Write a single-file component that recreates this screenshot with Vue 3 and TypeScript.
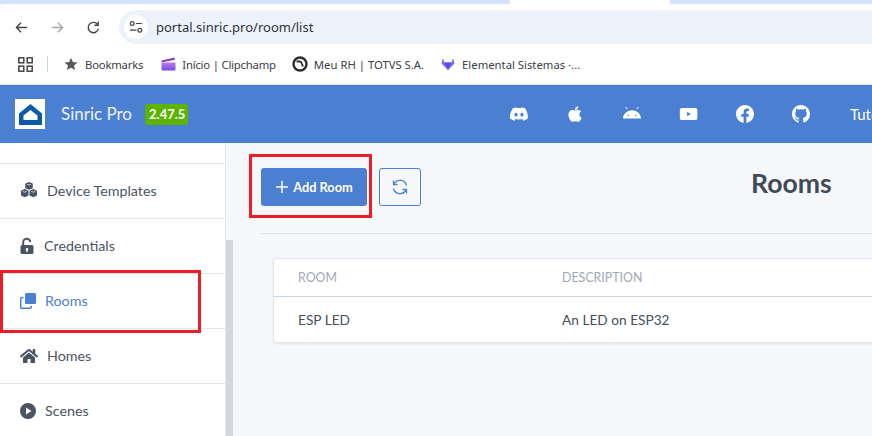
<script setup lang="ts">
interface NavItem { label: string; icon: string; active?: boolean }
const nav: NavItem[] = [
  { label: 'Device Templates', icon: 'cubes' },
  { label: 'Credentials', icon: 'lock' },
  { label: 'Rooms', icon: 'rooms', active: true },
  { label: 'Homes', icon: 'home' },
  { label: 'Scenes', icon: 'play' },
]
</script>

<template>
  <div class="screen">
    <div class="tabstrip"><div class="tab"></div></div>

    <div class="chrome">
      <div class="toolbar">
        <svg class="tb-icon" viewBox="0 0 16 16"><path d="M14 8H3M7.500 3 2.600 8l4.900 5" fill="none" stroke="#444" stroke-width="1.500"/></svg>
        <svg class="tb-icon" viewBox="0 0 16 16"><path d="M2 8h11M8.500 3l4.900 5-4.900 5" fill="none" stroke="#a8a8a8" stroke-width="1.500"/></svg>
        <svg class="tb-icon" viewBox="0 0 16 16"><path d="M13.200 9.500A5.500 5.500 0 1 1 12 4.400M13 1.500V5.600H8.900" fill="none" stroke="#444" stroke-width="1.500"/></svg>
        <div class="omnibox">
          <span class="site-chip">
            <svg width="14" height="14" viewBox="0 0 14 14" fill="none" stroke="#444" stroke-width="1.200"><circle cx="3.200" cy="3.500" r="1.900"/><path d="M7 3.500h6M1 10.200h6.500"/><circle cx="10.800" cy="10.200" r="1.900"/></svg>
          </span>
          <span class="url">portal.sinric.pro/room/list</span>
        </div>
      </div>
      <div class="bookmarks">
        <svg class="apps" viewBox="0 0 15 15" fill="none" stroke="#444" stroke-width="1.500"><rect x=".8" y=".8" width="5" height="5"/><rect x="9.200" y=".8" width="5" height="5"/><rect x=".8" y="9.200" width="5" height="5"/><rect x="9.200" y="9.200" width="5" height="5"/></svg>
        <span class="sep"></span>
        <span class="bm bm-star">
          <svg width="14" height="14" viewBox="0 0 14 14"><path d="M7 .8l1.900 4.300 4.600.4-3.500 3 1.100 4.600L7 10.700l-4.100 2.400L4 8.500.5 5.500l4.600-.4z" fill="#5a5a5a"/></svg>
          Bookmarks
        </span>
        <span class="bm bm-clip">
          <svg width="15" height="14" viewBox="0 0 15 14"><defs><linearGradient id="clip" x1="0" x2="0" y1="0" y2="1"><stop offset="0" stop-color="#c678e8"/><stop offset="1" stop-color="#6a4fe8"/></linearGradient></defs><path d="M.5 3.500 13.500.6l.5 2.200L.5 5.500z" fill="#7b45c8"/><rect x=".5" y="5.500" width="14" height="8" rx="1" fill="url(#clip)"/></svg>
          Início | Clipchamp
        </span>
        <span class="bm bm-rh">
          <svg width="16" height="16" viewBox="0 0 16 16"><circle cx="8" cy="8" r="6.500" fill="#fff" stroke="#2d2d2d" stroke-width="2.400"/><path d="M4.500 5.500H8c1 0 1.500 1 2 2.500l1 2.500" fill="none" stroke="#2d2d2d" stroke-width="1.800"/></svg>
          Meu RH | TOTVS S.A.
        </span>
        <span class="bm">
          <svg width="14" height="14" viewBox="0 0 14 14"><path d="M2 1 .5 6.500 7 13l6.500-6.500L12 1l-1.500 4.500h-7z" fill="#7a6cf0"/><path d="M3.500 5.500h7L7 13z" fill="#5a4be0"/></svg>
          Elemental Sistemas ·...
        </span>
      </div>
    </div>

    <header class="topbar">
      <div class="logo">
        <svg width="23" height="21" viewBox="0 0 23 21"><path d="M11.500 0 23 9.500V21H0V9.500z" fill="#0b5ba8"/><path d="M11.500 6 18.500 11.500V16h-14v-4.500z" fill="#fff"/></svg>
      </div>
      <span class="brand">Sinric Pro</span>
      <span class="version">2.47.5</span>
      <nav class="social">
        <svg class="s-icon" viewBox="0 0 24 24"><path d="M20.317 4.370a19.790 19.790 0 0 0-4.885-1.515c-.210.375-.445.865-.608 1.250a18.300 18.300 0 0 0-5.487 0c-.164-.393-.406-.874-.618-1.250A19.740 19.740 0 0 0 3.834 4.370C.534 9.046-.320 13.580.099 18.058a19.900 19.900 0 0 0 6.024 3.085c.462-.630.873-1.295 1.226-1.994-.653-.248-1.274-.550-1.872-.892l.364-.302c3.928 1.793 8.180 1.793 12.061 0l.373.302c-.598.342-1.220.644-1.873.891.360.698.772 1.363 1.225 1.994a19.800 19.800 0 0 0 6.033-3.084c.500-5.177-.838-9.674-3.548-13.660zM8.020 15.331c-1.183 0-2.157-1.086-2.157-2.419s.955-2.419 2.157-2.419c1.210 0 2.175 1.095 2.157 2.419 0 1.333-.956 2.419-2.157 2.419zm7.975 0c-1.183 0-2.157-1.086-2.157-2.419s.955-2.419 2.157-2.419c1.210 0 2.175 1.095 2.157 2.419 0 1.333-.946 2.419-2.157 2.419z"/></svg>
        <svg class="s-icon" viewBox="0 0 384 512"><path d="M318.700 268.700c-.2-36.700 16.400-64.400 50-84.800-18.800-26.900-47.200-41.700-84.700-44.600-35.500-2.800-74.300 20.700-88.500 20.700-15 0-49.400-19.700-76.400-19.700C63.300 141.200 4 184.800 4 273.500q0 39.300 14.400 81.200c12.800 36.700 59 126.700 107.200 125.200 25.200-.6 43-17.900 75.800-17.900 31.800 0 48.300 17.900 76.400 17.900 48.600-.7 90.400-82.500 102.600-119.300-65.200-30.700-61.700-90-61.700-91.900zm-56.600-164.200c27.300-32.400 24.800-61.900 24-72.500-24.100 1.400-52 16.400-67.900 34.900-17.500 19.800-27.800 44.300-25.600 71.900 26.100 2 49.900-11.400 69.500-34.300z"/></svg>
        <svg class="s-icon" viewBox="0 0 24 24"><path d="M5.500 5.500 3.500 2.500M18.500 5.500l2-3" stroke="#fff" stroke-width="1.300"/><path fill-rule="evenodd" d="M0 18C.3 12 5 7 12 7S23.700 12 24 18zM7 13a1 1 0 1 0 0 2 1 1 0 0 0 0-2zm10 0a1 1 0 1 0 0 2 1 1 0 0 0 0-2z"/></svg>
        <svg class="s-icon yt" viewBox="0 0 24 24"><path fill-rule="evenodd" d="M3.500 4h17A3.500 3.500 0 0 1 24 7.500v9a3.500 3.500 0 0 1-3.500 3.500h-17A3.500 3.500 0 0 1 0 16.500v-9A3.500 3.500 0 0 1 3.500 4zM10 9v6l5-3z"/></svg>
        <svg class="s-icon" viewBox="0 0 24 24"><path d="M24 12.073c0-6.627-5.373-12-12-12s-12 5.373-12 12c0 5.990 4.388 10.954 10.125 11.854v-8.385H7.078v-3.470h3.047V9.430c0-3.007 1.792-4.669 4.533-4.669 1.312 0 2.686.235 2.686.235v2.953H15.830c-1.491 0-1.956.925-1.956 1.874v2.250h3.328l-.532 3.470h-2.796v8.385C19.612 23.027 24 18.062 24 12.073z"/></svg>
        <svg class="s-icon" viewBox="0 0 16 16"><path d="M8 0C3.580 0 0 3.580 0 8c0 3.540 2.290 6.530 5.470 7.590.4.070.55-.17.55-.38 0-.19-.01-.82-.01-1.490-2.010.37-2.530-.49-2.690-.94-.09-.23-.48-.94-.82-1.130-.28-.15-.68-.52-.01-.53.63-.01 1.080.58 1.230.82.72 1.210 1.870.87 2.330.66.070-.52.28-.87.51-1.070-1.780-.2-3.640-.89-3.640-3.950 0-.87.31-1.590.82-2.150-.08-.2-.36-1.020.08-2.120 0 0 .67-.21 2.200.82.64-.18 1.320-.27 2-.27.68 0 1.360.09 2 .27 1.530-1.040 2.200-.82 2.200-.82.44 1.100.16 1.920.08 2.120.51.56.82 1.270.82 2.150 0 3.070-1.870 3.750-3.650 3.950.29.25.54.73.54 1.480 0 1.070-.01 1.930-.01 2.200 0 .21.15.46.55.38A8.013 8.013 0 0 0 16 8c0-4.420-3.580-8-8-8z"/></svg>
        <span class="nav-text">Tutorials</span>
      </nav>
    </header>

    <div class="body">
      <aside class="sidebar">
        <div class="nav-spacer"></div>
        <div v-for="item in nav" :key="item.label" class="nav-row" :class="{ active: item.active }">
          <svg v-if="item.icon === 'cubes'" class="n-icon cubes" viewBox="0 0 18 18" fill="currentColor"><path d="M9 0 13 1.700V6.500L9 8.200 5 6.500V1.700zM4.500 7.500l4 1.700v5L4.500 16.200l-4-2V9.200zM13.500 7.500l4 1.700v5l-4 2-4-2V9.200z"/><path d="M7 2.400 9 3.200l2-.8M2.500 10l2 .8 2-.8M11.500 10l2 .8 2-.8" fill="none" stroke="#fff" stroke-width=".8"/></svg>
          <svg v-else-if="item.icon === 'lock'" class="n-icon lock" viewBox="0 0 15 16" fill="currentColor"><path fill-rule="evenodd" d="M2 7h10a1.500 1.500 0 0 1 1.500 1.500v6A1.500 1.500 0 0 1 12 16H2a1.500 1.500 0 0 1-1.500-1.500v-6A1.500 1.500 0 0 1 2 7zm5 3a1.300 1.300 0 0 0-.7 2.400V14h1.400v-1.600A1.300 1.300 0 0 0 7 10z"/><path d="M3.200 7V4.500a3.500 3.500 0 0 1 7-.5" fill="none" stroke="currentColor" stroke-width="2"/></svg>
          <svg v-else-if="item.icon === 'rooms'" class="n-icon rooms" viewBox="0 0 16 16"><rect x="5" y="0" width="11" height="11" rx="1.500" fill="currentColor"/><path d="M3.500 4.500H2A1.500 1.500 0 0 0 .7 6v8.500A1.200 1.200 0 0 0 2 15.300h8A1.300 1.300 0 0 0 11.300 14v-1" fill="none" stroke="currentColor" stroke-width="1.500"/></svg>
          <svg v-else-if="item.icon === 'home'" class="n-icon" viewBox="0 0 576 512" fill="currentColor"><path d="M280.370 148.260L96 300.110V464a16 16 0 0 0 16 16l112.060-.29a16 16 0 0 0 15.920-16V368a16 16 0 0 1 16-16h64a16 16 0 0 1 16 16v95.640a16 16 0 0 0 16 16.050L464 480a16 16 0 0 0 16-16V300L295.670 148.260a12.190 12.190 0 0 0-15.300 0zM571.600 251.470L488 182.560V44.050a12 12 0 0 0-12-12h-56a12 12 0 0 0-12 12v72.610L318.470 43a48 48 0 0 0-61 0L4.340 251.470a12 12 0 0 0-1.600 16.900l25.500 31A12 12 0 0 0 45.150 301l235.220-193.740a12.190 12.190 0 0 1 15.300 0L530.900 301a12 12 0 0 0 16.900-1.600l25.500-31a12 12 0 0 0-1.700-16.930z"/></svg>
          <svg v-else class="n-icon play" viewBox="0 0 16 16" fill="currentColor"><path fill-rule="evenodd" d="M8 0a8 8 0 1 1 0 16A8 8 0 0 1 8 0zM6 4.500v7l5.500-3.500z"/></svg>
          <span>{{ item.label }}</span>
        </div>
      </aside>
      <div class="scrolltrack"><div class="scrollthumb"></div></div>

      <main class="content">
        <div class="actions">
          <button class="btn-add">
            <svg width="12" height="12" viewBox="0 0 12 12"><path d="M6 0v12M0 6h12" stroke="#fff" stroke-width="1.500"/></svg>
            Add Room
          </button>
          <button class="btn-refresh">
            <svg width="18" height="18" viewBox="0 0 18 18" fill="none" stroke="#4a7fd1" stroke-width="1.300"><g transform="matrix(-1 0 0 1 18 0)"><path d="M2.500 7.500A6.800 6.800 0 0 1 14.500 5l1 1.500"/><path d="M15.500 2.500v4h-4"/><path d="M15.500 10.500A6.800 6.800 0 0 1 3.500 13l-1-1.500"/><path d="M2.500 15.500v-4h4"/></g></svg>
          </button>
          <h1>Rooms</h1>
        </div>
        <div class="divider"></div>
        <section class="card">
          <div class="row head">
            <span class="col1">ROOM</span>
            <span>DESCRIPTION</span>
          </div>
          <div class="row">
            <span class="col1">ESP LED</span>
            <span>An LED on ESP32</span>
          </div>
        </section>
      </main>
    </div>

    <div class="mark mark-rooms"></div>
    <div class="mark mark-add"></div>
  </div>
</template>

<style>
html, body { margin: 0; padding: 0; overflow: hidden; background: #fff; }
</style>

<style scoped>
.screen {
  position: relative;
  width: 872px;
  height: 436px;
  overflow: hidden;
  display: flex;
  flex-direction: column;
  background: #f5f7fb;
  font-family: Lato, "Noto Sans", sans-serif;
}
.tabstrip { height: 4px; background: #d3e3fd; flex: none; position: relative; }
.tab { position: absolute; left: 510px; width: 160px; top: 0; height: 4px; background: #fff; }
.chrome { flex: none; height: 81px; background: #fff; display: flex; flex-direction: column; border-radius: 8px 0 0 0; font-family: "Noto Sans", sans-serif; }
.toolbar { flex: none; height: 40px; display: flex; align-items: center; padding: 6px 0 0 14px; box-sizing: border-box; }
.tb-icon { width: 15px; height: 15px; margin-right: 21px; flex: none; }
.toolbar .tb-icon:nth-child(3) { margin-right: 18px; }
.omnibox { flex: 1; height: 34px; background: #edf2fa; border-radius: 17px 0 0 17px; display: flex; align-items: center; padding-left: 5px; }
.site-chip { width: 24px; height: 24px; border-radius: 50%; background: #fff; display: flex; align-items: center; justify-content: center; }
.url { margin-left: 8px; font-size: 13px; color: #2f3237; }
.bookmarks { flex: 1; display: flex; align-items: center; padding-left: 18px; color: #3c4043; border-bottom: 1px solid #e3e3e3; }
.apps { width: 15px; height: 15px; flex: none; }
.sep { width: 1px; height: 16px; background: #c7d6f0; margin: 0 16px 0 14px; }
.bm { display: flex; align-items: center; gap: 7px; margin-right: 17px; white-space: nowrap; font-size: 11.3px; }
.bm-star { letter-spacing: -.2px; margin-right: 18px; }
.bm-clip { letter-spacing: -.2px; gap: 6px; margin-right: 16px; }
.bm-rh { gap: 6px; }
.topbar { flex: none; height: 58px; background: #4a7fd1; display: flex; align-items: center; color: #fff; padding-left: 15px; white-space: nowrap; }
.logo { width: 30px; height: 30px; background: #fff; display: flex; align-items: center; justify-content: center; flex: none; }
.brand { margin-left: 16px; font-size: 17px; color: #eef3fb; width: 72px; padding-bottom: 2px; }
.version { margin-left: 12px; background: #5cb300; color: #fff; font-size: 13px; font-weight: 700; padding: 2px 4px; border-radius: 2px; line-height: 17px; width: 35px; text-align: center; }
.social { position: absolute; left: 510px; display: flex; align-items: center; }
.s-icon { width: 18px; height: 18px; fill: #fff; margin-right: 38.4px; flex: none; }
.s-icon.yt { transform: translateX(.6px); }
.nav-text { font-size: 15px; margin-left: 1.6px; }
.body { flex: 1; display: flex; min-height: 0; }
.sidebar { width: 225px; flex: none; background: #fff; font-size: 14.3px; color: #4a5462; }
.nav-spacer { height: 20px; border-bottom: 1px solid #e3e7ee; }
.nav-row { height: 55px; box-sizing: border-box; display: flex; align-items: center; gap: 9px; padding: 0 0 2px 20px; border-bottom: 1px solid #e3e7ee; }
.nav-row.active { color: #4a7fd1; }
.n-icon { width: 18px; height: 18px; flex: none; margin-top: 1px; }
.n-icon.cubes { height: 17px; }
.n-icon.lock { width: 15px; }
.n-icon.rooms { width: 16px; height: 16px; }
.n-icon.play { width: 16px; height: 16px; }
.scrolltrack { width: 9px; flex: none; background: #f5f7fb; border-left: 1px solid #e3e7ee; box-sizing: border-box; position: relative; }
.scrollthumb { position: absolute; top: 97px; bottom: 0; left: 0; right: 1px; background: #d3d8df; }
.content { flex: 1; min-width: 0; padding: 25px 0 0 27px; }
.actions { display: flex; align-items: center; height: 38px; }
.btn-add { width: 106px; height: 38px; border: none; border-radius: 3px; background: #4a7fd1; color: #fff; font: 700 12.8px Lato, sans-serif; display: flex; align-items: center; justify-content: center; gap: 5px; padding: 0 0 0 1px; }
.btn-refresh { width: 42px; height: 38px; margin-left: 12px; background: transparent; border: 1px solid #4a7fd1; border-radius: 3px; display: flex; align-items: center; justify-content: center; padding: 0; }
h1 { margin: 0 0 8px 330px; font-size: 26.6px; font-weight: 700; color: #414b57; }
.divider { height: 1px; background: #dde1ea; margin-top: 27px; }
.card { width: 700px; margin: 24px 0 0 12px; background: #fff; border: 1px solid #e2e6ee; border-radius: 3px; box-shadow: 0 1px 2px rgba(60, 70, 90, .1); font-size: 13.7px; color: #47505c; }
.row { display: flex; align-items: center; height: 45px; box-sizing: border-box; padding: 0 0 0 24px; }
.row.head { height: 38px; padding-bottom: 1px; border-bottom: 1px solid #c9d3e3; color: #a0a8b8; font-size: 12.4px; }
.col1 { width: 264px; }
.mark { position: absolute; border: 3px solid #ee1c25; box-sizing: border-box; pointer-events: none; }
.mark-rooms { left: 0; top: 270px; width: 201px; height: 63px; }
.mark-add { left: 249px; top: 154px; width: 123px; height: 64px; }
</style>
